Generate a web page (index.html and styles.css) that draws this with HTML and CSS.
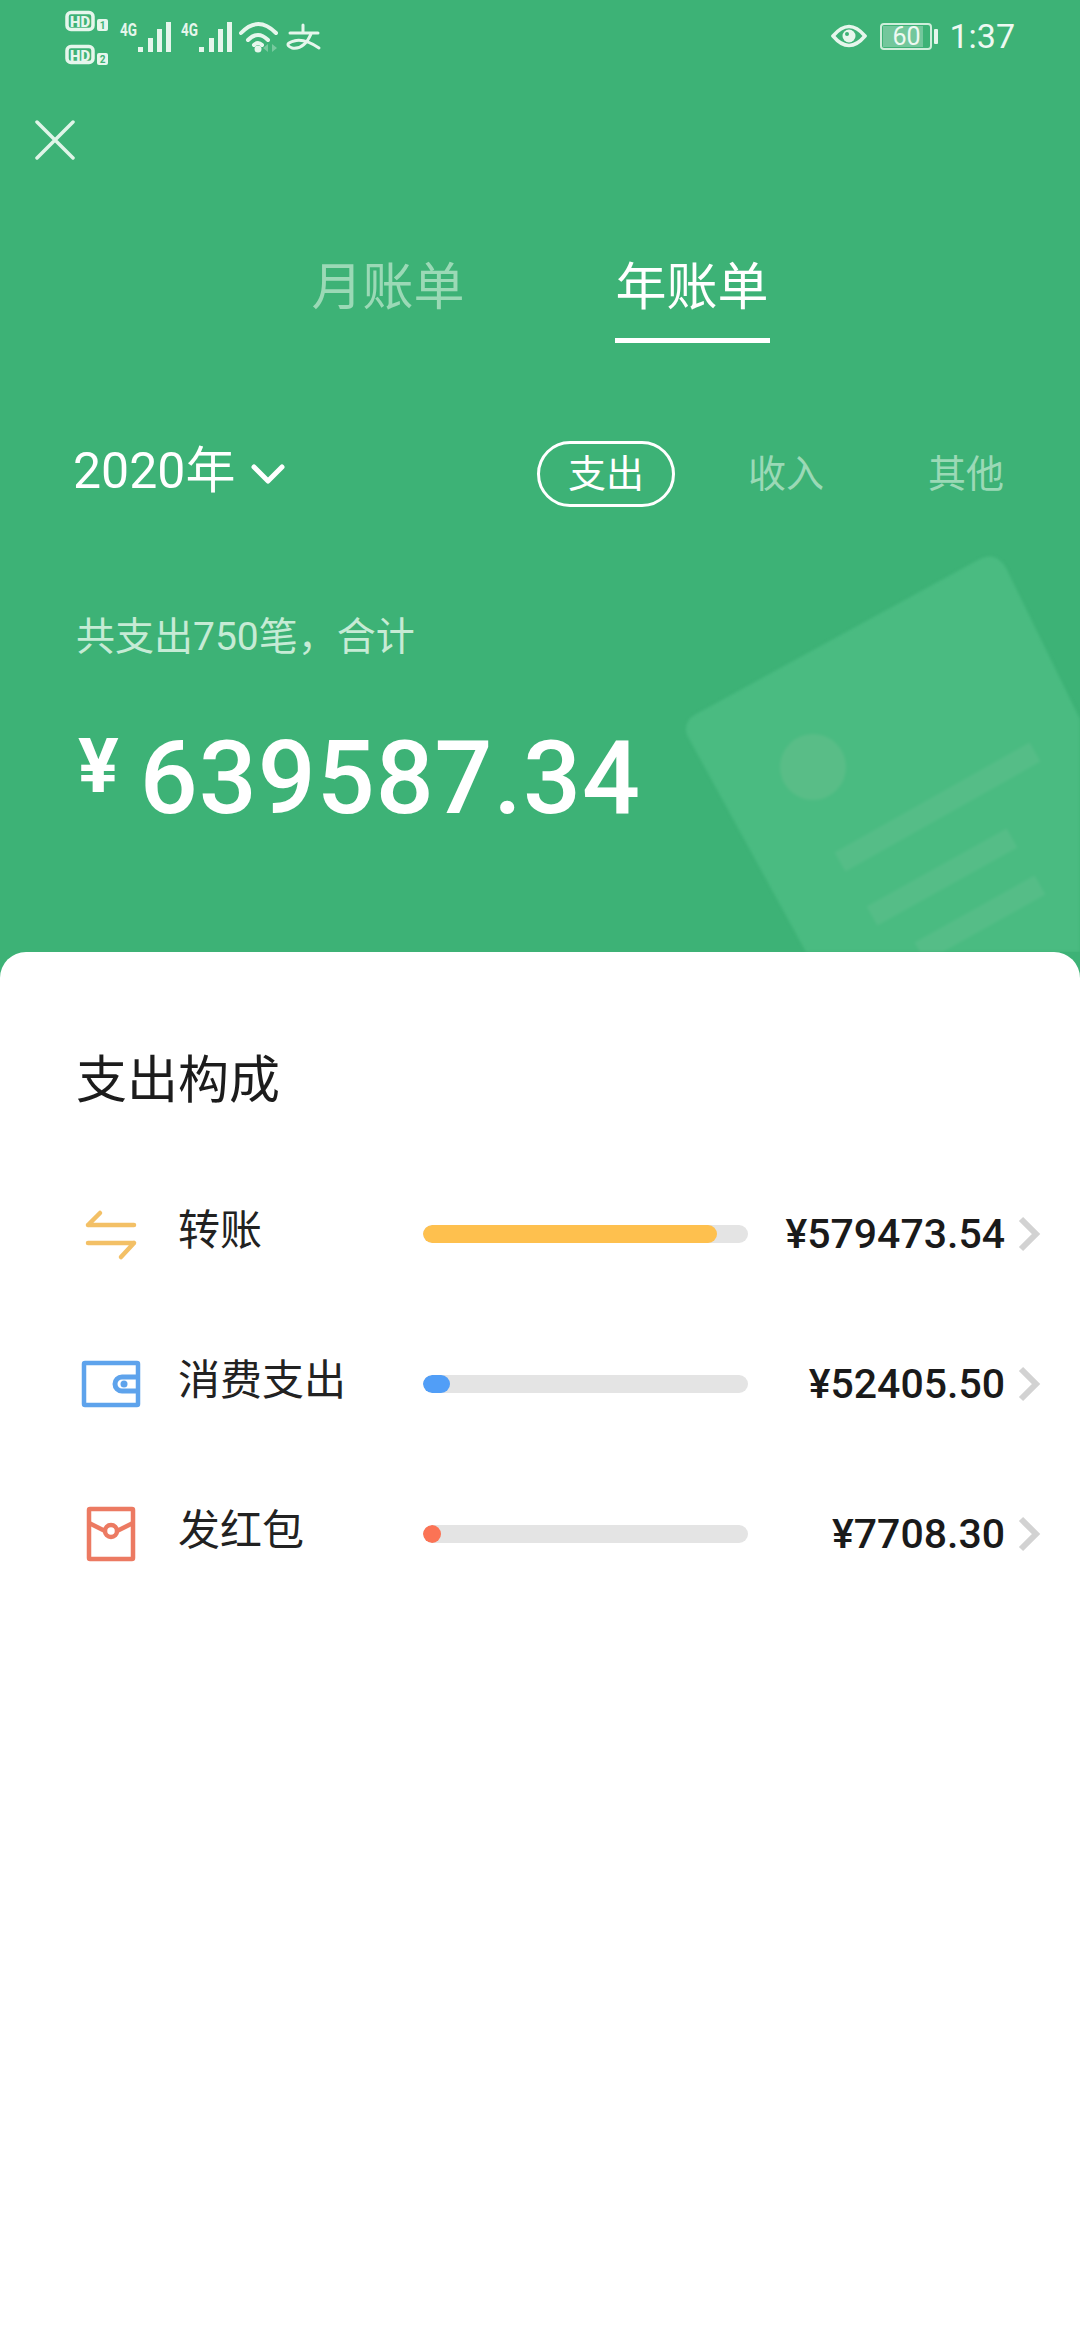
FILE: index.html
```html
<!DOCTYPE html>
<html lang="zh-CN">
<head>
<meta charset="utf-8">
<title>年账单</title>
<link rel="stylesheet" href="styles.css">
</head>
<body>
<div class="page">
  <section class="hero">
    <svg class="watermark" viewBox="0 0 1080 952" width="1080" height="952" aria-hidden="true">
      <path class="wm-card" d="M700 712 L978 560 Q996 550 1006 568 L1100 760 L1100 952 L806 952 L687 735 Q682 720 700 712 Z"/>
      <circle class="wm-dot" cx="813" cy="767" r="33"/>
      <path class="wm-line" d="M840 862 L1035 752 M872 916 L1012 838 M920 952 L1040 885"/>
    </svg>
    <header class="status">
      <svg class="status-left" viewBox="0 0 262 72" width="262" height="72">
        <rect class="hd-box" x="3" y="12.500" width="26" height="17" rx="4"/>
        <text class="hd-text" x="16" y="27" text-anchor="middle" textLength="20" lengthAdjust="spacingAndGlyphs">HD</text>
        <rect class="sim" x="33" y="19" width="11" height="12" rx="2"/>
        <text class="sim-text" x="38.500" y="29" text-anchor="middle">1</text>
        <rect class="hd-box" x="3" y="46.500" width="26" height="16" rx="4"/>
        <text class="hd-text" x="16" y="60.500" text-anchor="middle" textLength="20" lengthAdjust="spacingAndGlyphs">HD</text>
        <rect class="sim" x="33" y="53" width="11" height="12" rx="2"/>
        <text class="sim-text" x="38.500" y="63" text-anchor="middle">2</text>
        <text class="g4" x="56" y="36" textLength="17" lengthAdjust="spacingAndGlyphs">4G</text>
        <path class="signal" d="M74 47h5v5h-5zM84 38h5v14h-5zM93 29h5v23h-5zM102 22h5v30h-5z"/>
        <text class="g4" x="117" y="36" textLength="17" lengthAdjust="spacingAndGlyphs">4G</text>
        <path class="signal" d="M135 47h5v5h-5zM145 38h5v14h-5zM154 29h5v23h-5zM163 22h5v30h-5z"/>
        <path class="wifi" d="M177 33 Q194 15 212 33 M184 40 Q194 30 204 40 M190 45 Q194 41 198 45"/>
        <circle class="wifi-dot" cx="194" cy="49" r="3.500"/>
        <path class="wifi-faint" d="M204 44 L199 48 L204 52 Z M208 44 L213 48 L208 52 Z"/>
        <path class="alipay" d="M226 33 H254 M239 25 V33 M247 34 Q240 50 228 48 Q219 44 230 41 Q240 38 255 48"/>
      </svg>
      <div class="status-right">
        <svg class="eye" viewBox="0 0 36 24" width="36" height="24" aria-hidden="true">
          <path d="M2 12 Q18 -7 34 12 Q18 31 2 12 Z"/>
          <circle cx="18" cy="12" r="6.500"/>
          <circle class="eye-glint" cx="16" cy="10" r="2"/>
        </svg>
        <div class="battery">
          <div class="battery-body"><span class="battery-fill"></span><span class="battery-num">60</span></div>
          <span class="battery-nub"></span>
        </div>
        <span class="time">1:37</span>
      </div>
    </header>
    <svg class="close" viewBox="0 0 40 40" width="40" height="40" aria-hidden="true"><path d="M2 2 L38 38 M38 2 L2 38"/></svg>
    <nav class="tabs">
      <span class="tab">月账单</span>
      <span class="tab tab-active">年账单</span>
    </nav>
    <div class="filters">
      <div class="year">
        <span>2020年</span>
        <svg class="caret" viewBox="0 0 34 22" width="34" height="22" aria-hidden="true"><path d="M3 4 L17 18 L31 4"/></svg>
      </div>
      <div class="kinds">
        <span class="kind kind-active">支出</span>
        <span class="kind">收入</span>
        <span class="kind">其他</span>
      </div>
    </div>
    <p class="summary">共支出750笔，合计</p>
    <div class="total"><span class="total-cur">¥</span><span class="total-num">639587.34</span></div>
  </section>
  <section class="card">
    <h1 class="card-title">支出构成</h1>
    <div class="rows">
      <div class="row">
        <svg class="row-icon icon-transfer" viewBox="0 0 64 64" width="64" height="64" aria-hidden="true"><path d="M9 23 H55 M9 23 L21 11 M9 41 H55 M55 41 L42 55"/></svg>
        <span class="row-label">转账</span>
        <div class="track"><div class="fill fill-y" style="width:90.500%"></div></div>
        <span class="row-amt">¥579473.54</span>
        <svg class="chev" viewBox="0 0 24 36" width="24" height="36" aria-hidden="true"><path d="M4 3 L19 18 L4 33"/></svg>
      </div>
      <div class="row">
        <svg class="row-icon icon-wallet" viewBox="0 0 64 64" width="64" height="64" aria-hidden="true"><rect x="5" y="11" width="54" height="42" rx="1"/><path d="M58 25 H43 A7 7 0 0 0 43 39 H58"/><circle class="wallet-dot" cx="45" cy="32" r="3.500"/></svg>
        <span class="row-label">消费支出</span>
        <div class="track"><div class="fill fill-b" style="width:8.300%"></div></div>
        <span class="row-amt">¥52405.50</span>
        <svg class="chev" viewBox="0 0 24 36" width="24" height="36" aria-hidden="true"><path d="M4 3 L19 18 L4 33"/></svg>
      </div>
      <div class="row">
        <svg class="row-icon icon-packet" viewBox="0 0 64 64" width="64" height="64" aria-hidden="true"><rect x="10" y="7" width="44" height="50" rx="1"/><path d="M10 21 L26 29 M54 21 L38 29"/><circle cx="32" cy="29" r="6"/></svg>
        <span class="row-label">发红包</span>
        <div class="track"><div class="fill fill-r" style="width:5.500%"></div></div>
        <span class="row-amt">¥7708.30</span>
        <svg class="chev" viewBox="0 0 24 36" width="24" height="36" aria-hidden="true"><path d="M4 3 L19 18 L4 33"/></svg>
      </div>
    </div>
  </section>
</div>
</body>
</html>
```
FILE: styles.css
```css
* { box-sizing: border-box; }
html, body { margin: 0; padding: 0; }
body {
  width: 1080px;
  height: 2340px;
  overflow: hidden;
  background: #3db276;
  font-family: "Noto Sans CJK SC", "Noto Sans", sans-serif;
}
.page { display: flex; flex-direction: column; height: 2340px; }

.hero { position: relative; height: 952px; flex: none; overflow: hidden; background: #3db276; }
.watermark { position: absolute; left: 0; top: 0; filter: blur(1.5px); }
.wm-card { fill: #4abb81; }
.wm-dot { fill: #59bd87; }
.wm-line { fill: none; stroke: #55bd87; stroke-width: 22; }

.status { position: relative; display: flex; justify-content: space-between; align-items: flex-start; height: 72px; padding: 0 65px 0 64px; }
.hd-box { fill: none; stroke: #e6f6ec; stroke-width: 3.500; }
.hd-text { font: 900 15px "Roboto", sans-serif; fill: #e6f6ec; }
.sim { fill: #e6f6ec; }
.sim-text { font: 700 10px "Roboto", sans-serif; fill: #3db276; }
.g4 { font: 700 18px "Roboto", sans-serif; fill: #e6f6ec; }
.signal { fill: #e6f6ec; }
.wifi { fill: none; stroke: #e6f6ec; stroke-width: 4; stroke-linecap: round; }
.wifi-dot { fill: #e6f6ec; }
.wifi-faint { fill: #e6f6ec; opacity: 0.35; }
.alipay { fill: none; stroke: #e6f6ec; stroke-width: 3; stroke-linecap: round; }

.status-right { display: flex; align-items: center; height: 72px; }
.eye { margin-right: 13px; }
.eye path { fill: none; stroke: #e6f6ec; stroke-width: 3.500; }
.eye circle { fill: #e6f6ec; }
.eye .eye-glint { fill: #3db276; }
.battery { display: flex; align-items: center; margin-right: 11px; }
.battery-body { position: relative; display: flex; align-items: center; justify-content: center; width: 52px; height: 27px; border: 2px solid #cfeedb; border-radius: 4px; }
.battery-fill { position: absolute; left: 1px; top: 1px; bottom: 1px; width: 40px; background: rgba(255, 255, 255, 0.28); }
.battery-num { position: relative; font: 400 25px/1 "Roboto", sans-serif; color: #eef9f2; }
.battery-nub { width: 4px; height: 15px; margin-left: 2px; background: #e6f6ec; border-radius: 1px; }
.time { font: 400 34px/1 "Roboto", sans-serif; color: #eef9f2; }

.close { position: relative; display: block; margin: 48px 0 0 35px; }
.close path { fill: none; stroke: #e0f5e8; stroke-width: 3.500; stroke-linecap: round; }

.tabs { position: relative; display: flex; justify-content: center; gap: 149px; margin-top: 88px; }
.tab { padding: 0 1px 20px; border-bottom: 5px solid transparent; font-size: 51px; line-height: 70px; color: #9bd9b6; }
.tab-active { color: #fff; border-bottom-color: #fff; }

.filters { position: relative; display: flex; justify-content: space-between; align-items: center; height: 66px; margin-top: 98px; padding: 0 45px 0 73px; }
.year { display: flex; align-items: center; gap: 16px; font: 400 50px/66px "Roboto", "Noto Sans CJK SC", sans-serif; color: #fff; }
.year span { position: relative; top: -3px; }
.caret path { fill: none; stroke: #fff; stroke-width: 5; stroke-linecap: round; stroke-linejoin: round; }
.kinds { display: flex; gap: 42px; }
.kind { display: flex; align-items: center; justify-content: center; width: 138px; height: 66px; padding-bottom: 7px; border: 3px solid transparent; border-radius: 33px; font-size: 38px; color: #9bd9b6; }
.kind-active { color: #fff; border-color: #fff; }

.summary { position: relative; margin: 100px 0 0 76px; font: 400 39px/60px "Roboto", "Noto Sans CJK SC", sans-serif; color: #c6ebd5; }
.total { position: relative; display: flex; align-items: baseline; margin: 51px 0 0 78px; font-family: "Roboto", sans-serif; color: #fff; line-height: 120px; }
.total-cur { font-size: 76px; font-weight: 700; margin-right: 21px; position: relative; top: -21px; }
.total-num { font-size: 102px; font-weight: 500; letter-spacing: 1px; }

.card { flex: 1; padding: 0 39px 0 0; background: #fff; border-radius: 26px 26px 0 0; }
.card-title { margin: 88px 0 0 76px; font-size: 51px; font-weight: 400; line-height: 72px; color: #1c1c1c; }
.rows { display: flex; flex-direction: column; gap: 70px; margin-top: 82px; }
.row { display: flex; align-items: center; height: 80px; padding-left: 79px; }
.row-icon { flex: none; margin-right: 35px; fill: none; }
.icon-transfer path { stroke: #f3c066; stroke-width: 4.500; stroke-linecap: round; }
.icon-wallet rect, .icon-wallet path { fill: none; stroke: #5ea3ec; stroke-width: 4.500; }
.icon-wallet path { stroke-width: 5; }
.wallet-dot { fill: #5ea3ec; }
.icon-packet rect, .icon-packet path, .icon-packet circle { fill: none; stroke: #ec7a62; stroke-width: 4.500; }
.row-label { flex: none; width: 245px; margin-top: -14px; font-size: 42px; line-height: 60px; color: #222; }
.track { flex: none; width: 325px; height: 18px; background: #e4e4e4; border-radius: 9px; overflow: hidden; }
.fill { height: 100%; border-radius: 9px; }
.fill-y { background: #fec04e; }
.fill-b { background: #519ef7; }
.fill-r { background: #fb7355; }
.row-amt { flex: 1; text-align: right; font: 500 41px/60px "Roboto", sans-serif; color: #1a1a1a; white-space: nowrap; }
.chev { flex: none; margin-left: 12px; }
.chev path { fill: none; stroke: #d2d2d2; stroke-width: 6; }
```
